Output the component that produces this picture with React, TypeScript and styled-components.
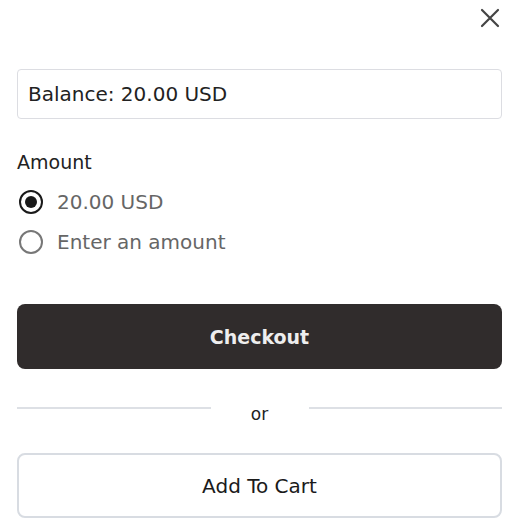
import { FC, ReactElement, useState } from 'react'
import styled, { createGlobalStyle } from 'styled-components'

const Global = createGlobalStyle`
  * { box-sizing: border-box; }
  body {
    margin: 0;
    background: #ffffff;
    font-family: 'DejaVu Sans', 'Noto Sans', sans-serif;
    color: #222222;
  }
`

const options = ['20.00 USD', 'Enter an amount']

const App: FC = (): ReactElement => {
  const [selected, setSelected] = useState<number>(0)
  return (
    <>
      <Global />
      <Panel>
        <Top>
          <Close aria-label="close">
            <svg width="20" height="20" viewBox="0 0 20 20">
              <path d="M2 2 L18 18 M18 2 L2 18" stroke="#444" strokeWidth="2.2" strokeLinecap="round" />
            </svg>
          </Close>
        </Top>
        <Balance>Balance: 20.00 USD</Balance>
        <Label>Amount</Label>
        <Options>
          {options.map((item, _index) => (
            <Option key={item} onClick={() => setSelected(_index)}>
              <Radio active={selected === _index} />
              <OptionText>{item}</OptionText>
            </Option>
          ))}
        </Options>
        <Primary>Checkout</Primary>
        <Divider>
          <Line />
          <Or>or</Or>
          <Line />
        </Divider>
        <Secondary>Add To Cart</Secondary>
      </Panel>
    </>
  )
}

const Panel = styled.div`
  width: 510px;
  padding: 0 8px 0 17px;
  display: flex;
  flex-direction: column;
`
const Top = styled.div`
  height: 69px;
  display: flex;
  justify-content: flex-end;
  padding-top: 7px;
`
const Close = styled.button`
  width: 22px;
  height: 22px;
  padding: 0;
  margin-right: 1px;
  border: none;
  background: none;
  display: flex;
  align-items: center;
  justify-content: center;
  cursor: pointer;
`
const Balance = styled.div`
  height: 50px;
  border: 1px solid #dcdde2;
  border-radius: 4px;
  padding: 0 10px;
  display: flex;
  align-items: center;
  font-size: 20px;
  color: #222;
`
const Label = styled.div`
  margin-top: 32px;
  font-size: 19px;
  line-height: 22px;
  color: #222;
`
const Options = styled.div`
  margin-top: 17px;
  display: flex;
  flex-direction: column;
  gap: 16px;
`
const Option = styled.label`
  display: flex;
  align-items: center;
  gap: 14px;
  height: 24px;
  padding-left: 2px;
  cursor: pointer;
`
const Radio = styled.span<{ active: boolean }>`
  width: 24px;
  height: 24px;
  border-radius: 50%;
  border: 2px solid ${(p) => (p.active ? '#1a1a1a' : '#777')};
  display: flex;
  align-items: center;
  justify-content: center;
  &::after {
    content: '';
    width: 12px;
    height: 12px;
    border-radius: 50%;
    background: #1a1a1a;
    display: ${(p) => (p.active ? 'block' : 'none')};
  }
`
const OptionText = styled.span`
  font-size: 20px;
  color: #666;
`
const Primary = styled.button`
  margin-top: 50px;
  height: 65px;
  border: none;
  border-radius: 8px;
  background: #302c2c;
  color: #eeeeee;
  font-family: inherit;
  font-size: 19px;
  font-weight: 700;
  cursor: pointer;
`
const Divider = styled.div`
  margin-top: 33px;
  display: flex;
  align-items: center;
  height: 24px;
`
const Line = styled.div`
  flex: 1;
  height: 2px;
  background: #dde0e5;
  margin-top: -12px;
`
const Or = styled.span`
  width: 98px;
  text-align: center;
  font-size: 17px;
  color: #222;
`
const Secondary = styled.button`
  margin-top: 27px;
  height: 65px;
  border: 2px solid #d8dce2;
  border-radius: 8px;
  background: #fff;
  color: #1a1a1a;
  font-family: inherit;
  font-size: 20px;
  font-weight: 500;
  cursor: pointer;
`

export default App
